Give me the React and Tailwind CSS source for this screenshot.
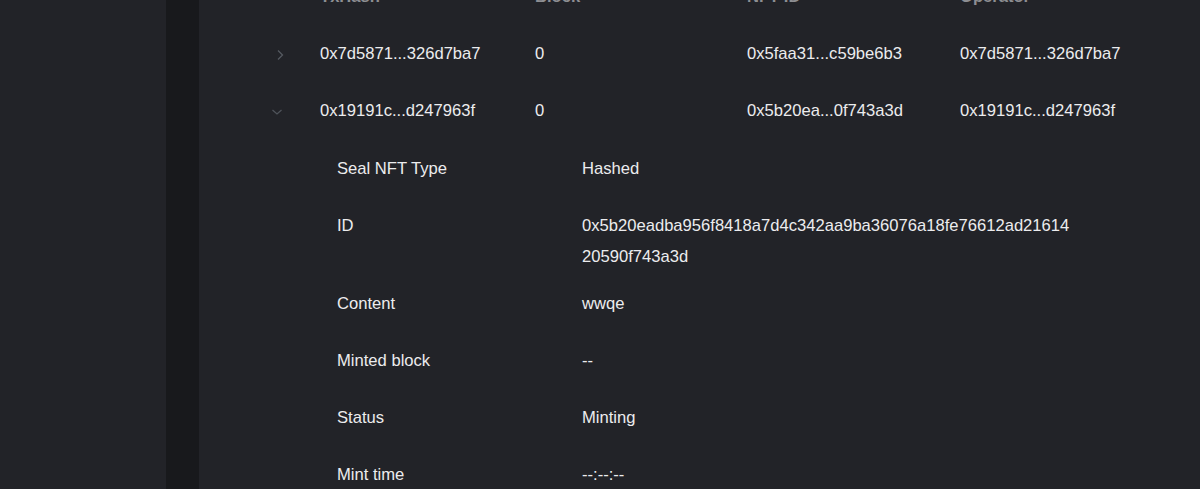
import React from "react";

const font = { fontFamily: '"Liberation Sans", Arial, sans-serif' };

function ChevronRight() {
  return (
    <svg width="10" height="12" viewBox="0 0 10 12" className="ml-[13px]">
      <path d="M3 1.5 L7.5 6 L3 10.5" fill="none" stroke="#555960" strokeWidth="1.3" />
    </svg>
  );
}

function ChevronDown() {
  return (
    <svg width="12" height="10" viewBox="0 0 12 10" className="ml-[9px]">
      <path d="M1.5 3 L6 7 L10.5 3" fill="none" stroke="#4f535a" strokeWidth="1.3" />
    </svg>
  );
}

function Row({ icon, cells }) {
  return (
    <div className="flex h-[57px] items-center text-[#ececee]">
      <div className="w-[58px] flex items-center">{icon}</div>
      <div className="w-[215px]">{cells[0]}</div>
      <div className="w-[212px]">{cells[1]}</div>
      <div className="w-[213px]">{cells[2]}</div>
      <div className="flex-1">{cells[3]}</div>
    </div>
  );
}

function Detail({ label, children, extra = "pb-[13px]" }) {
  return (
    <div className={`flex pl-[75px] pt-[13px] ${extra} leading-[31px] text-[#ececee]`}>
      <div className="w-[245px] shrink-0">{label}</div>
      <div>{children}</div>
    </div>
  );
}

export default function App() {
  return (
    <div className="flex h-[489px] w-full overflow-hidden bg-[#222328] text-[16.6px]" style={font}>
      <div className="w-[166px] shrink-0 bg-[#222328]" />
      <div className="w-[33px] shrink-0 bg-[#18191c]" />
      <div className="flex-1 bg-[#222328] pl-[63px]">
        <div className="-mt-[31px]">
          <div className="flex h-[57px] items-center font-bold text-[#8d8e92]">
            <div className="w-[58px]" />
            <div className="w-[215px]">TxHash</div>
            <div className="w-[212px]">Block</div>
            <div className="w-[213px]">NFT ID</div>
            <div className="flex-1">Operator</div>
          </div>
          <Row
            icon={<ChevronRight />}
            cells={["0x7d5871...326d7ba7", "0", "0x5faa31...c59be6b3", "0x7d5871...326d7ba7"]}
          />
          <Row
            icon={<ChevronDown />}
            cells={["0x19191c...d247963f", "0", "0x5b20ea...0f743a3d", "0x19191c...d247963f"]}
          />
          <div>
            <Detail label="Seal NFT Type">Hashed</Detail>
            <Detail label="ID" extra="pb-[3px]">
              <div>0x5b20eadba956f8418a7d4c342aa9ba36076a18fe76612ad21614</div>
              <div>20590f743a3d</div>
            </Detail>
            <Detail label="Content">wwqe</Detail>
            <Detail label="Minted block">--</Detail>
            <Detail label="Status">Minting</Detail>
            <Detail label="Mint time">--:--:--</Detail>
          </div>
        </div>
      </div>
    </div>
  );
}
